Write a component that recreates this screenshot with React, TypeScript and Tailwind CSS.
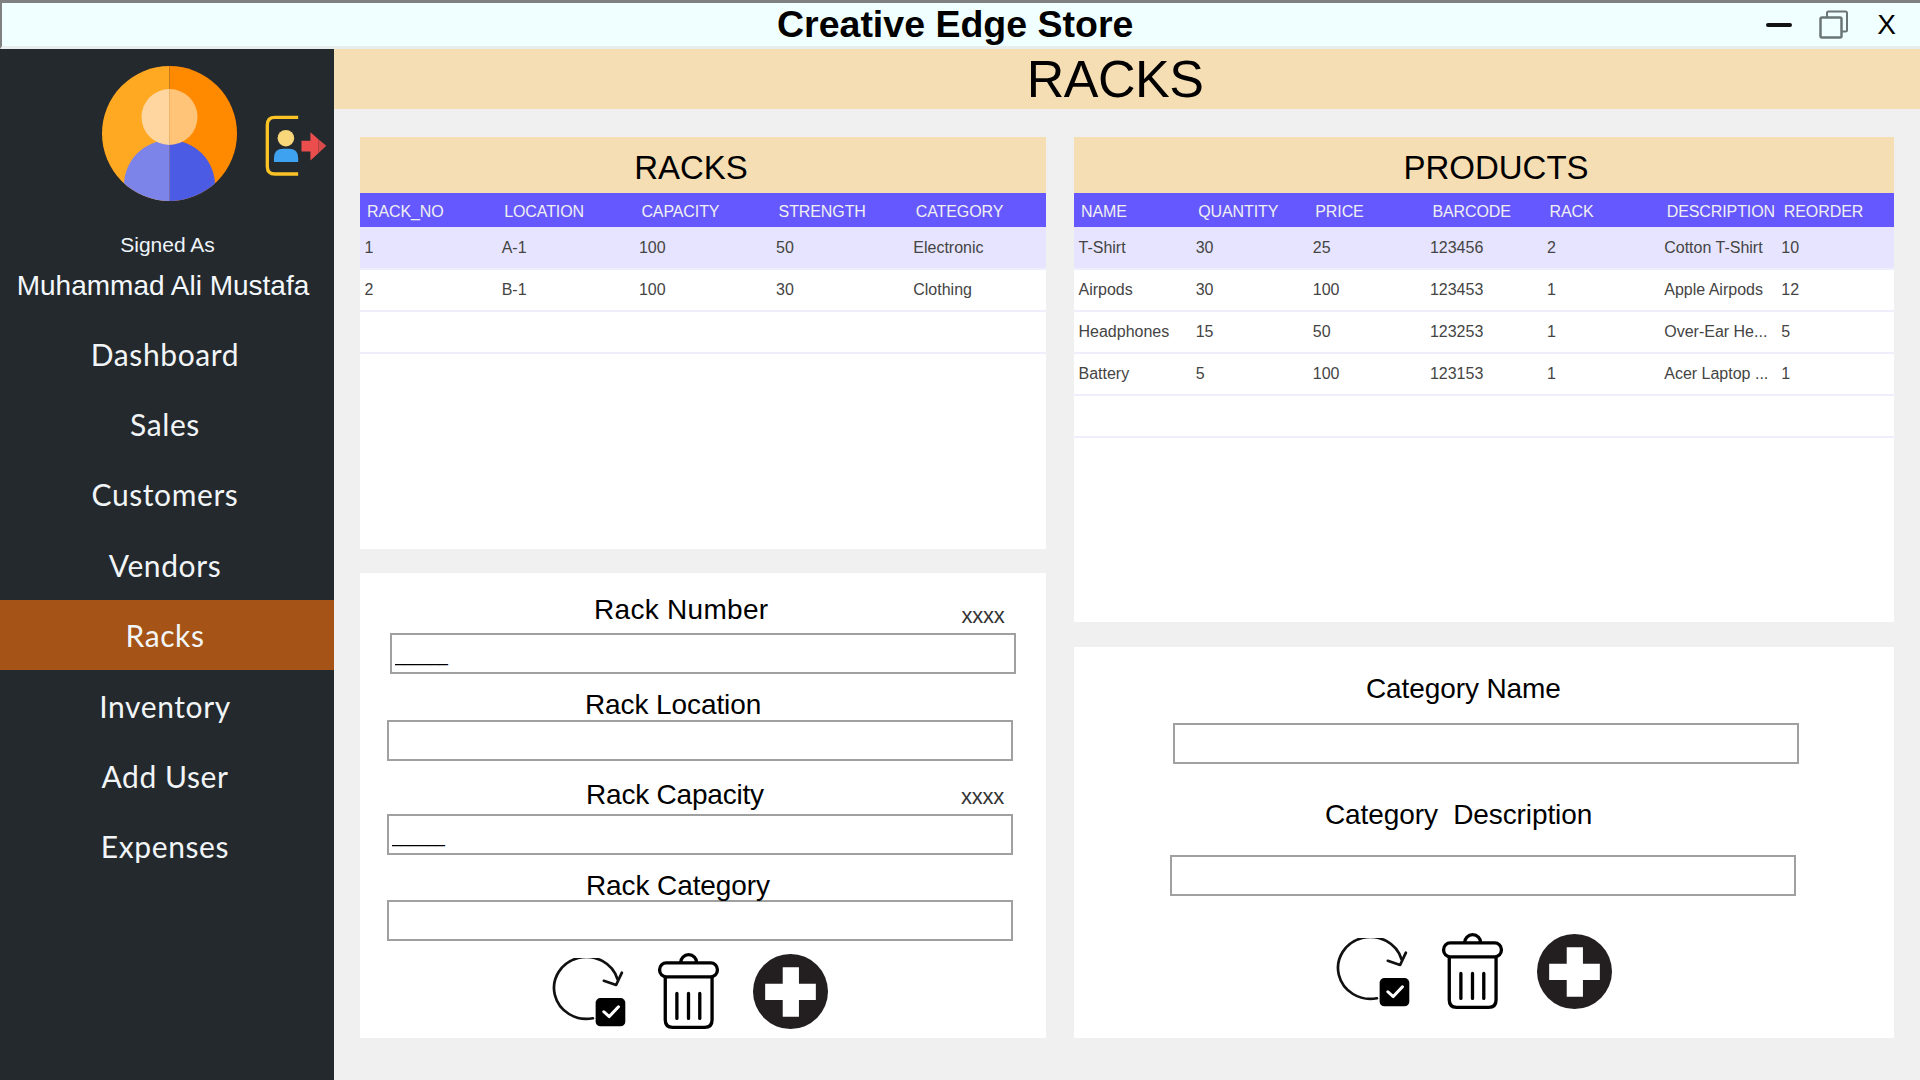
import React from 'react'

const NAV_ITEMS = ['Dashboard', 'Sales', 'Customers', 'Vendors', 'Racks', 'Inventory', 'Add User', 'Expenses']

const RACK_COLUMNS = ['RACK_NO', 'LOCATION', 'CAPACITY', 'STRENGTH', 'CATEGORY']
const RACK_ROWS = [
  ['1', 'A-1', '100', '50', 'Electronic'],
  ['2', 'B-1', '100', '30', 'Clothing'],
  ['', '', '', '', ''],
]

const PRODUCT_COLUMNS = ['NAME', 'QUANTITY', 'PRICE', 'BARCODE', 'RACK', 'DESCRIPTION', 'REORDER']
const PRODUCT_ROWS = [
  ['T-Shirt', '30', '25', '123456', '2', 'Cotton T-Shirt', '10'],
  ['Airpods', '30', '100', '123453', '1', 'Apple Airpods', '12'],
  ['Headphones', '15', '50', '123253', '1', 'Over-Ear He...', '5'],
  ['Battery', '5', '100', '123153', '1', 'Acer Laptop ...', '1'],
  ['', '', '', '', '', '', ''],
]

function Avatar() {
  return (
    <svg width="135" height="135" viewBox="0 0 135 135" className="shrink-0">
      <defs>
        <clipPath id="avatarClip">
          <circle cx="67.5" cy="67.5" r="67.5" />
        </clipPath>
      </defs>
      <g clipPath="url(#avatarClip)">
        <rect x="0" y="0" width="67.5" height="135" fill="#ffa822" />
        <rect x="67.5" y="0" width="67.5" height="135" fill="#ff8a00" />
        <path d="M67.5 74 A45.5 45.5 0 0 0 22 119.5 V135 H67.5 Z" fill="#7c84ea" />
        <path d="M67.5 74 A45.5 45.5 0 0 1 113 119.5 V135 H67.5 Z" fill="#4b5be3" />
        <path d="M67.5 23 A28 28 0 0 0 67.5 79 Z" fill="#ffd6a0" />
        <path d="M67.5 23 A28 28 0 0 1 67.5 79 Z" fill="#ffc477" />
      </g>
    </svg>
  )
}

function LogoutIcon() {
  return (
    <svg width="63" height="63" viewBox="795 345 190 190" className="mt-[49px] ml-[28px] shrink-0">
      <path d="M895 352 H825 Q802 352 802 375 V500 Q802 523 825 523 H895" fill="none" stroke="#fbc326" strokeWidth="10" />
      <circle cx="858" cy="415" r="25" fill="#f8d77a" />
      <path d="M822 487 V475 Q822 447 850 447 H867 Q895 447 895 475 V487 Z" fill="#3ea2f0" />
      <path d="M905 423 H932 V397 L956 418 V460 L932 482 V455 H905 Z" fill="#ec4e4e" />
      <path d="M956 418 L980 438 L956 460 Z" fill="#d94a4a" />
    </svg>
  )
}

function RefreshIcon() {
  return (
    <svg width="75" height="70" viewBox="70 85 220 215" preserveAspectRatio="none" className="mt-[5px] shrink-0">
      <path d="M190 270 A95 95 0 1 1 262 150" fill="none" stroke="#111" strokeWidth="8" strokeLinecap="round" />
      <path d="M222 155 L258 168 L275 130" fill="none" stroke="#111" strokeWidth="8" strokeLinecap="round" strokeLinejoin="round" />
      <rect x="198" y="208" width="87" height="87" rx="14" fill="#000" />
      <path d="M222 250 L238 265 L265 235" fill="none" stroke="#fff" strokeWidth="9" strokeLinecap="round" strokeLinejoin="round" />
    </svg>
  )
}

function TrashIcon() {
  return (
    <svg width="63" height="76" viewBox="380 68 186 229" className="ml-[30px] shrink-0">
      <rect x="386" y="98" width="174" height="42" rx="20" fill="none" stroke="#000" strokeWidth="10" />
      <path d="M449 98 A24.5 25 0 0 1 498 98" fill="none" stroke="#000" strokeWidth="10" />
      <path d="M403 140 V270 Q403 292 425 292 H522 Q544 292 544 270 V140" fill="none" stroke="#000" strokeWidth="10" />
      <path d="M438 190 V265 M473 190 V265 M507 190 V265" fill="none" stroke="#000" strokeWidth="10" strokeLinecap="round" />
    </svg>
  )
}

function PlusIcon() {
  return (
    <svg width="75" height="75" viewBox="669 69 222 222" className="ml-[33px] mt-[1px] shrink-0">
      <circle cx="780" cy="180" r="111" fill="#231f20" />
      <path d="M757 108 H805 V157 H855 V205 H805 V255 H757 V205 H705 V157 H757 Z" fill="#fff" />
    </svg>
  )
}

function DataTable({ title, columns, rows, titleClass }: { title: string; columns: string[]; rows: string[][]; titleClass: string }) {
  return (
    <div className="bg-white h-full">
      <div className={`h-[56px] bg-[#f5deb3] flex items-center justify-center pt-[6px] text-[33px] text-black ${titleClass}`}>
        {title}
      </div>
      <table className="w-full table-fixed border-collapse text-[16px]">
        <thead>
          <tr className="h-[34px] bg-[#6658ff]">
            {columns.map((c) => (
              <th key={c} className="pl-[7px] pt-[3px] font-normal text-left tracking-[-0.1px] text-[#f0f0f0] overflow-hidden whitespace-nowrap">
                {c}
              </th>
            ))}
          </tr>
        </thead>
        <tbody>
          {rows.map((row, i) => (
            <tr key={i} className={`h-[42px] border-b-2 border-[#eeeefc] ${i === 0 ? 'bg-[#e6e4fe]' : 'bg-white'}`}>
              {row.map((v, j) => (
                <td key={j} className="pl-[4.5px] text-[#444] overflow-hidden whitespace-nowrap">
                  {v}
                </td>
              ))}
            </tr>
          ))}
        </tbody>
      </table>
    </div>
  )
}

function TextBox({ left, mask }: { left: string; mask?: boolean }) {
  return (
    <input
      readOnly
      value={mask ? '______' : ''}
      className={`block w-[626px] h-[41px] border-2 border-[#a0a0a0] bg-white pl-[3px] pt-[6px] text-[16px] text-black outline-none ${left}`}
    />
  )
}

function IconRow({ className }: { className: string }) {
  return (
    <div className={`flex items-start ${className}`}>
      <RefreshIcon />
      <TrashIcon />
      <PlusIcon />
    </div>
  )
}

export default function App() {
  return (
    <div className="w-[1920px] h-[1080px] overflow-hidden flex flex-col bg-[#f0f0f0] font-['Liberation_Sans',Arial,sans-serif]">
      {/* Title bar */}
      <div className="h-[49px] shrink-0 flex items-center bg-[#f0ffff] border-t-[3px] border-l-[2px] border-b-[3px] border-t-[#808080] border-l-[#808080] border-b-[#e8eeee]">
        <span className="ml-[775px] text-[37.5px] leading-none font-bold text-black">Creative Edge Store</span>
        <div className="ml-auto flex items-center">
          <span className="w-[26px] h-[4px] rounded-full bg-[#111]" />
          <svg width="30" height="29" viewBox="0 0 30 29" className="ml-[27px]">
            <path d="M8 7 V3 Q8 1.5 9.5 1.5 H26.5 Q28 1.5 28 3 V20 Q28 21.5 26.5 21.5 H23" fill="none" stroke="#6b7575" strokeWidth="2" />
            <rect x="1.5" y="7.5" width="21" height="20" rx="1.5" fill="none" stroke="#6b7575" strokeWidth="2.5" />
          </svg>
          <span className="ml-[28px] mr-[24px] text-[28px] leading-none text-black">X</span>
        </div>
      </div>

      <div className="flex flex-1 min-h-0">
        {/* Sidebar */}
        <aside className="w-[334px] shrink-0 bg-[#24292d] flex flex-col">
          <div className="flex items-start pl-[102px] pt-[17px]">
            <Avatar />
            <LogoutIcon />
          </div>
          <div className="mt-[32px] pl-[1px] text-center text-[21px] leading-[24px] text-[#eef4fa]">Signed As</div>
          <div className="mt-[13px] pr-[8px] text-center text-[28px] leading-[32px] text-[#f4f8fc] whitespace-nowrap">Muhammad Ali Mustafa</div>
          <nav className="mt-[16px] flex flex-col font-['Lato',sans-serif]">
            {NAV_ITEMS.map((item) => (
              <div
                key={item}
                className={`h-[70.4px] flex items-center justify-center pr-[4px] pt-[2px] text-[30px] tracking-[0.6px] text-[#f2f5f8] ${item === 'Racks' ? 'bg-[#a55316]' : ''}`}
              >
                {item}
              </div>
            ))}
          </nav>
        </aside>

        {/* Main */}
        <main className="flex-1 flex flex-col min-w-0">
          <div className="h-[60px] shrink-0 bg-[#f5deb3] flex items-center justify-center pr-[24px] text-[52px] leading-none tracking-[-0.5px] text-black">
            RACKS
          </div>
          <div className="flex gap-[28px] pl-[26px] pt-[28px]">
            {/* Left column */}
            <div className="w-[686px] flex flex-col gap-[24px]">
              <div className="h-[412px]">
                <DataTable title="RACKS" columns={RACK_COLUMNS} rows={RACK_ROWS} titleClass="pr-[24px]" />
              </div>
              <div className="h-[465px] bg-white pt-[21px] text-[28px] leading-[32px] tracking-[-0.1px] text-black">
                <div className="flex">
                  <span className="ml-[234px] tracking-[0.3px]">Rack Number</span>
                  <span className="ml-[193px] mt-[10px] text-[22px] leading-[24px] tracking-[-0.2px] text-[#333]">xxxx</span>
                </div>
                <TextBox left="ml-[30px] mt-[5px]" mask />
                <div className="mt-[15px] ml-[225px]">Rack Location</div>
                <TextBox left="ml-[27px] -mt-[1px]" />
                <div className="flex mt-[18px]">
                  <span className="ml-[226px] tracking-[-0.2px]">Rack Capacity</span>
                  <span className="ml-[197px] mt-[6px] text-[22px] leading-[24px] tracking-[-0.2px] text-[#333]">xxxx</span>
                </div>
                <TextBox left="ml-[27px] mt-[3px]" mask />
                <div className="mt-[15px] ml-[226px]">Rack Category</div>
                <TextBox left="ml-[27px] -mt-[2px]" />
                <IconRow className="ml-[192px] mt-[12px]" />
              </div>
            </div>

            {/* Right column */}
            <div className="w-[820px] flex flex-col gap-[25px]">
              <div className="h-[485px]">
                <DataTable title="PRODUCTS" columns={PRODUCT_COLUMNS} rows={PRODUCT_ROWS} titleClass="pl-[24px]" />
              </div>
              <div className="h-[391px] bg-white pt-[26px] text-[28px] leading-[32px] tracking-[-0.1px] text-black">
                <div className="ml-[292px]">Category Name</div>
                <TextBox left="ml-[99px] mt-[18px]" />
                <div className="mt-[35px] ml-[251px] whitespace-pre">Category  Description</div>
                <TextBox left="ml-[96px] mt-[24px]" />
                <IconRow className="ml-[262px] mt-[37px]" />
              </div>
            </div>
          </div>
        </main>
      </div>
    </div>
  )
}
